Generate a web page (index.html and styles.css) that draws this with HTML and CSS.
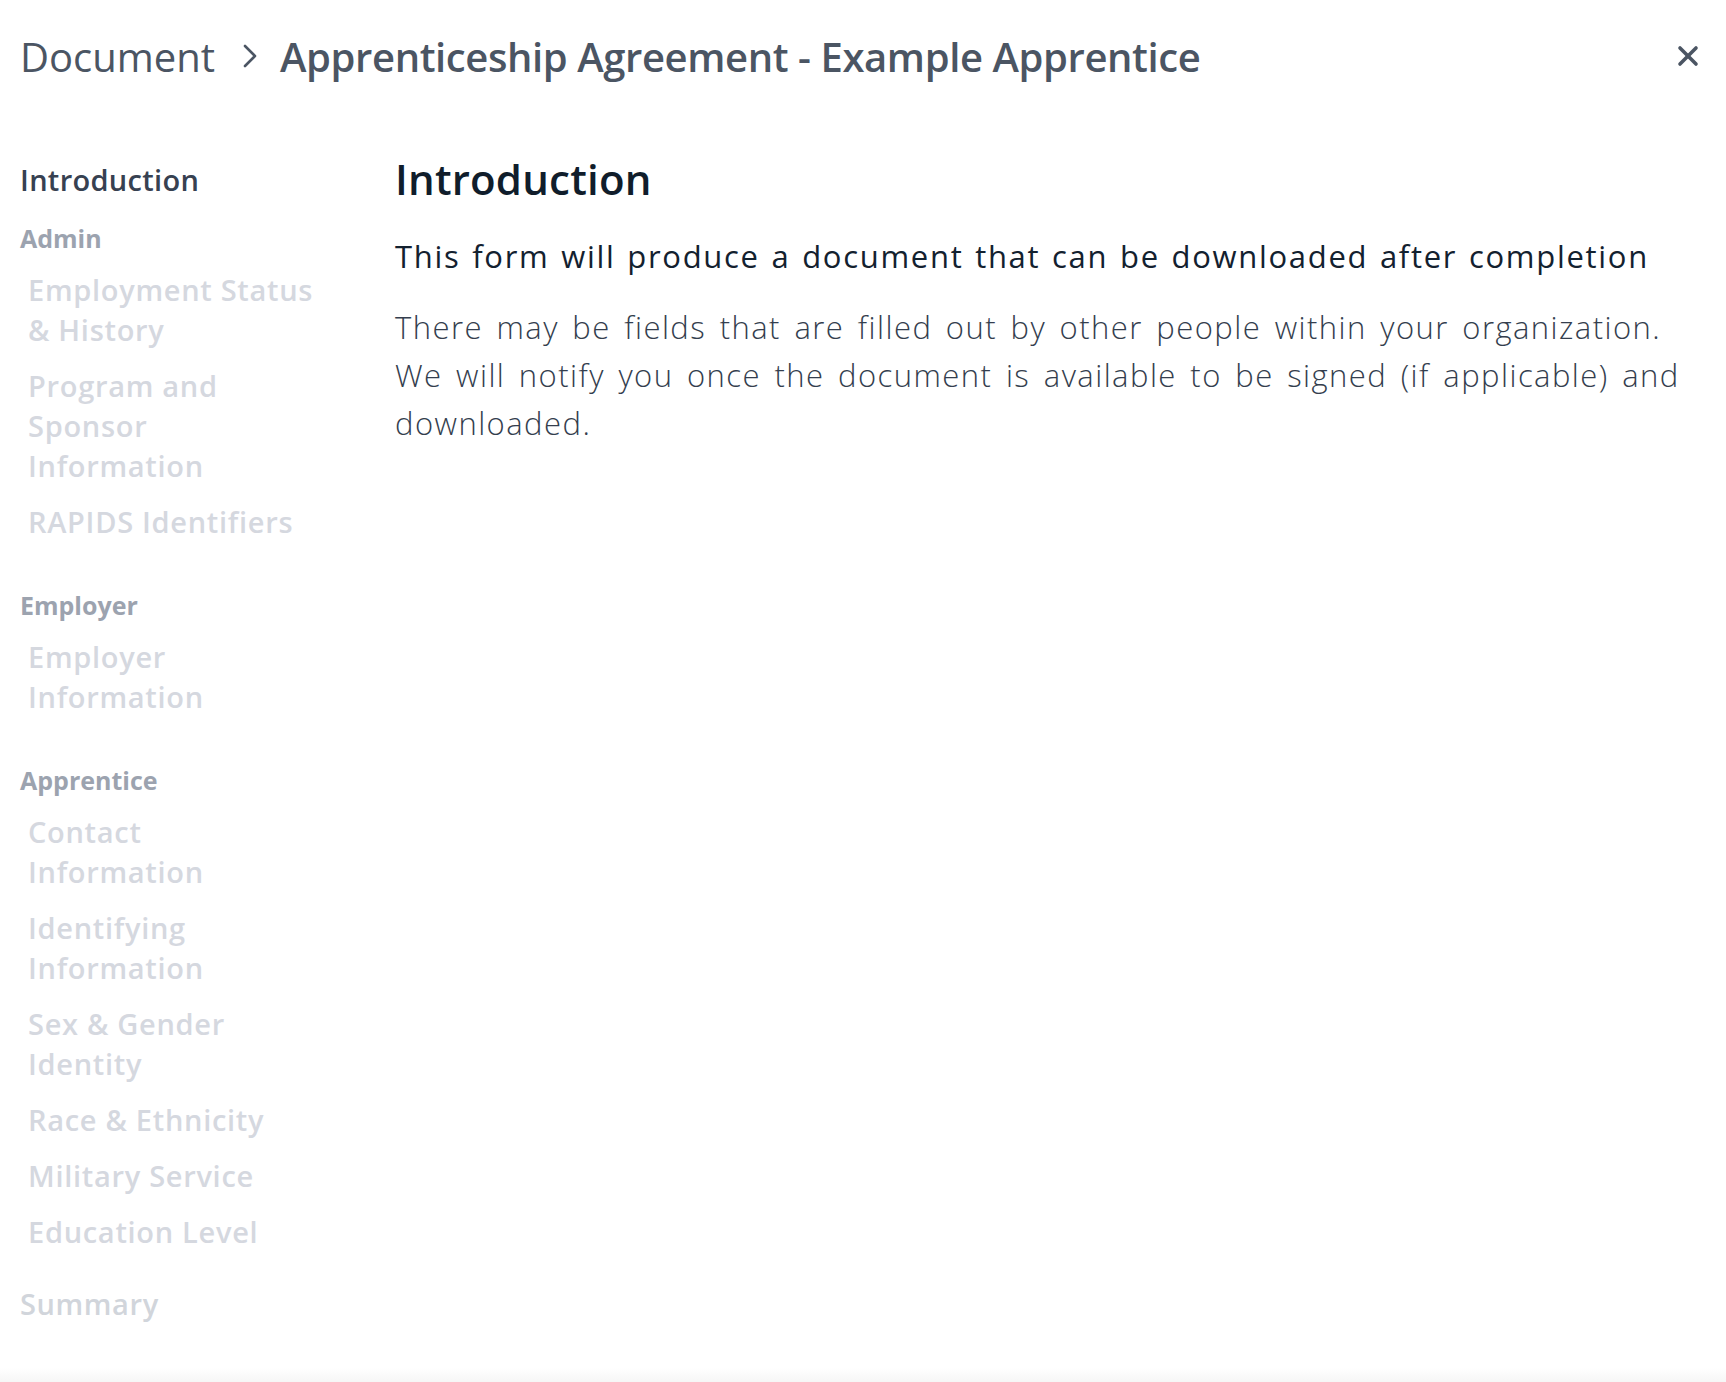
FILE: index.html
```html
<!DOCTYPE html>
<html>
<head>
    <title>Apprenticeship Agreement - Example Apprentice</title>
    <meta charset="UTF-8">
    <meta name="viewport" content="width=device-width, initial-scale=1.0" />
    <link rel="stylesheet" href="styles.css">
</head>

<body>
    <div class="page">
        <header class="top-bar">
            <div class="crumbs">
                <span class="crumb">Document</span>
                <svg class="crumb-sep" width="14" height="24" viewBox="0 0 14 24">
                    <polyline points="2,2 12,12 2,22" fill="none" stroke="#4b5563" stroke-width="2.6" stroke-linecap="round" stroke-linejoin="round" />
                </svg>
                <span class="crumb crumb-current">Apprenticeship Agreement - Example Apprentice</span>
            </div>
            <button class="close-btn" aria-label="Close">
                <svg width="22" height="22" viewBox="0 0 22 22">
                    <line x1="3" y1="3" x2="19" y2="19" stroke="#4b5563" stroke-width="3.6" stroke-linecap="round" />
                    <line x1="19" y1="3" x2="3" y2="19" stroke="#4b5563" stroke-width="3.6" stroke-linecap="round" />
                </svg>
            </button>
        </header>

        <div class="layout">
            <nav class="steps">
                <a class="step-top active">Introduction</a>

                <div class="step-group">
                    <div class="group-title">Admin</div>
                    <a class="step">Employment Status<br>&amp; History</a>
                    <a class="step">Program and<br>Sponsor<br>Information</a>
                    <a class="step">RAPIDS Identifiers</a>
                </div>

                <div class="step-group">
                    <div class="group-title">Employer</div>
                    <a class="step">Employer<br>Information</a>
                </div>

                <div class="step-group">
                    <div class="group-title">Apprentice</div>
                    <a class="step">Contact<br>Information</a>
                    <a class="step">Identifying<br>Information</a>
                    <a class="step">Sex &amp; Gender<br>Identity</a>
                    <a class="step">Race &amp; Ethnicity</a>
                    <a class="step">Military Service</a>
                    <a class="step">Education Level</a>
                </div>

                <a class="step-top summary">Summary</a>
            </nav>

            <main class="content">
                <h2 class="section-title">Introduction</h2>
                <p class="lead">This form will produce a document that can be downloaded after completion</p>
                <p class="body-text">There may be fields that are filled out by other people within your organization. We will notify you once the document is available to be signed (if applicable) and downloaded.</p>
            </main>
        </div>

        <div class="foot-shade"></div>
    </div>
</body>
</html>
```

FILE: styles.css
```css
html { margin: 0; padding: 0; border: 0; }
body { margin: 0; font-family: 'Open Sans', 'Noto Sans', sans-serif; background: #fff; color: #374151; }

.page { min-height: 100vh; display: flex; flex-direction: column; }

/* header */
.top-bar { height: 112px; display: flex; align-items: center; justify-content: space-between; padding: 0 27px 0 20px; }
.crumbs { display: flex; align-items: center; }
.crumb { font-size: 40px; color: #4b5563; font-weight: 400; white-space: nowrap; }
.crumb-current { font-weight: 600; letter-spacing: -0.4px; }
.crumb-sep { margin: 0 23px 0 28px; }
.close-btn { border: 0; background: none; padding: 0; cursor: pointer; display: flex; }

/* body */
.layout { flex: 1; display: flex; }

.steps { width: 355px; flex: none; padding: 48px 0 40px 20px; display: flex; flex-direction: column; align-items: flex-start; white-space: nowrap; }
.step-top { font-size: 29px; line-height: 40px; font-weight: 600; color: #374151; letter-spacing: 0.3px; }
.step-top.summary { margin-top: 32px; color: #d1d5db; letter-spacing: 0.6px; }
.step-group { display: flex; flex-direction: column; align-items: flex-start; margin-top: 46px; }
.step-top + .step-group { margin-top: 21px; }
.group-title { font-size: 25px; line-height: 34px; font-weight: 700; color: #9ca3af; margin-bottom: 15px; }
.step { font-size: 29px; line-height: 40px; font-weight: 600; color: #d5d8df; padding-left: 8px; letter-spacing: 0.7px; }
.step + .step { margin-top: 16px; }

.content { flex: 1; padding: 39px 12px 0 20px; }
.section-title { margin: 0; font-size: 42px; line-height: 56px; font-weight: 600; color: #101d2b; letter-spacing: 0.2px; }
.lead { margin: 27px 0 0; font-size: 31px; line-height: 44px; font-weight: 500; color: #13212f; letter-spacing: 1.7px; word-spacing: 2px; }
.body-text { margin: 25px 0 0; font-size: 31px; line-height: 48px; font-weight: 300; color: #343e4e; letter-spacing: 1.45px; word-spacing: 4px; }

.foot-shade { height: 14px; background: linear-gradient(#fff, #f6f6f6); }
```
